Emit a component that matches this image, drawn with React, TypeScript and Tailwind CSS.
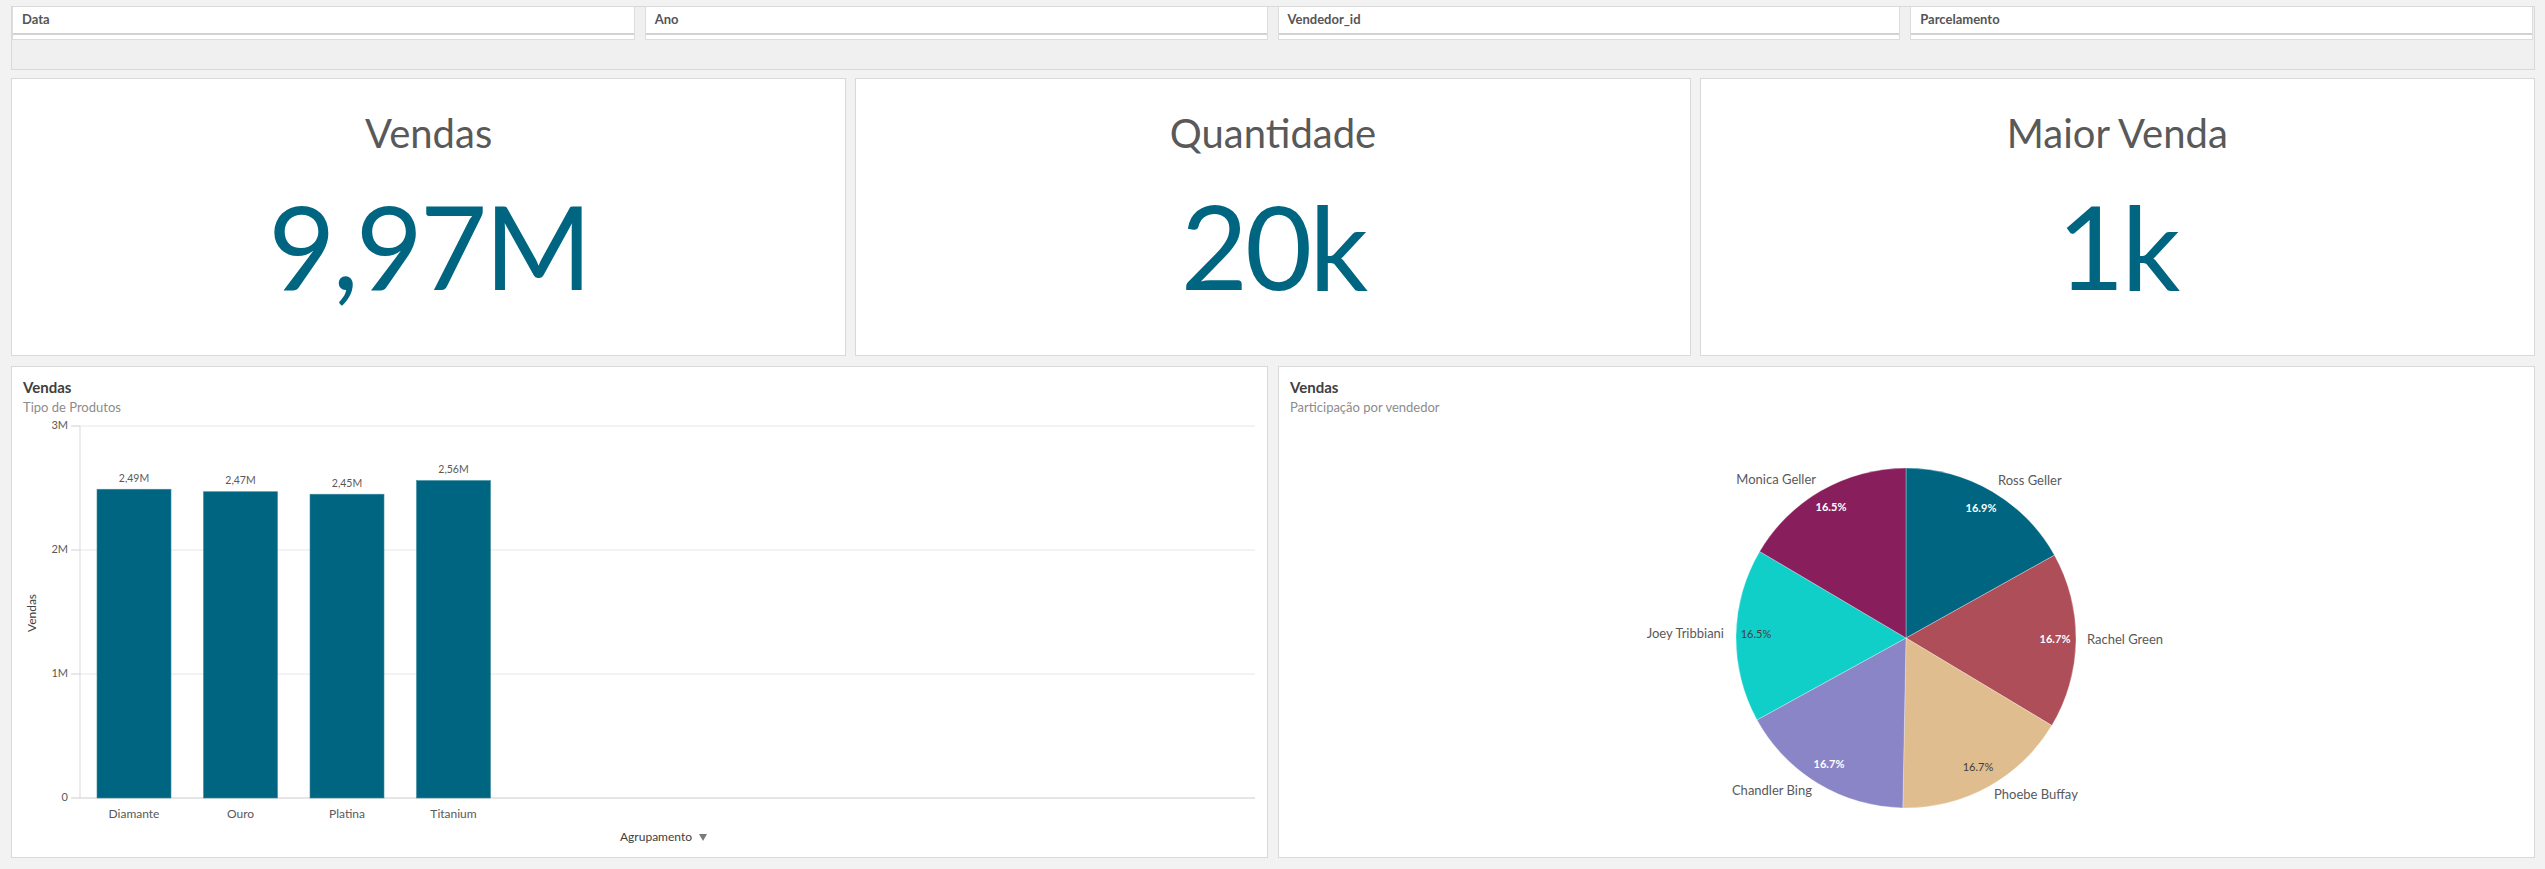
import React from "react";

const filters = ["Data", "Ano", "Vendedor_id", "Parcelamento"];

const kpis = [
  { title: "Vendas", value: "9,97M" },
  { title: "Quantidade", value: "20k" },
  { title: "Maior Venda", value: "1k" },
];

const bars = [
  { label: "Diamante", value: 2.49, text: "2,49M" },
  { label: "Ouro", value: 2.47, text: "2,47M" },
  { label: "Platina", value: 2.45, text: "2,45M" },
  { label: "Titanium", value: 2.56, text: "2,56M" },
];

// angles go clockwise from 12 o'clock
const slices = [
  { name: "Ross Geller", pct: 16.9, color: "#006580", dark: false, lx: 719, ly: 64, anchor: "start", px: 702, py: 91 },
  { name: "Rachel Green", pct: 16.7, color: "#ad4e59", dark: false, lx: 808, ly: 223, anchor: "start", px: 776, py: 222 },
  { name: "Phoebe Buffay", pct: 16.7, color: "#e0bd8e", dark: true, lx: 715, ly: 378, anchor: "start", px: 699, py: 350 },
  { name: "Chandler Bing", pct: 16.7, color: "#8a85c6", dark: false, lx: 533, ly: 374, anchor: "end", px: 550, py: 347 },
  { name: "Joey Tribbiani", pct: 16.5, color: "#10cfc9", dark: true, lx: 445, ly: 217, anchor: "end", px: 477, py: 217 },
  { name: "Monica Geller", pct: 16.5, color: "#881f5c", dark: false, lx: 537, ly: 63, anchor: "end", px: 552, py: 90 },
];

function FilterBox({ label }: { label: string }) {
  return (
    <div className="bg-white border-x border-[#dcdcdc]">
      <div className="h-[28px] flex items-center px-[9px] border-b-2 border-[#d2d2d2] text-[13px] font-bold text-[#555]">
        {label}
      </div>
      <div className="h-[5px] border-b border-[#dcdcdc]"></div>
    </div>
  );
}

function KpiCard({ title, value }: { title: string; value: string }) {
  return (
    <div className="bg-white border border-[#d9d9d9] flex flex-col items-center pt-[34px]">
      <div className="text-[40px] leading-[40px] text-[#595959]">{title}</div>
      <div className="mt-[35px] text-[116px] leading-[116px] tracking-[-3px] text-[#006580]">{value}</div>
    </div>
  );
}

function CardTitle({ title, subtitle }: { title: string; subtitle: string }) {
  return (
    <div className="px-[11px] pt-[11px]">
      <div className="text-[15px] leading-[18px] font-bold text-[#404040]">{title}</div>
      <div className="mt-[3px] text-[13px] leading-[16px] text-[#8c8c8c]">{subtitle}</div>
    </div>
  );
}

function BarChart() {
  const y0 = 380;
  const unit = 124;
  return (
    <svg width={1255} height={436} className="mt-[3px] block">
      {[3, 2, 1].map((t) => (
        <g key={t}>
          <line x1={68} x2={1243} y1={y0 - t * unit} y2={y0 - t * unit} stroke="#e6e6e6" />
          <line x1={59} x2={68} y1={y0 - t * unit} y2={y0 - t * unit} stroke="#d0d0d0" />
          <text x={56} y={y0 - t * unit} textAnchor="end" dominantBaseline="middle" fontSize={11} fill="#595959">
            {t}M
          </text>
        </g>
      ))}
      <line x1={68} x2={68} y1={y0 - 3 * unit} y2={y0} stroke="#d9d9d9" />
      <line x1={59} x2={1243} y1={y0} y2={y0} stroke="#cccccc" />
      <text x={56} y={y0} textAnchor="end" dominantBaseline="middle" fontSize={11} fill="#595959">
        0
      </text>
      <text
        x={21}
        y={195}
        textAnchor="middle"
        dominantBaseline="middle"
        fontSize={12}
        fill="#404040"
        transform="rotate(-90 21 195)"
      >
        Vendas
      </text>
      {bars.map((b, i) => {
        const x = 85 + i * 106.5;
        const h = b.value * unit;
        return (
          <g key={b.label}>
            <rect x={x} y={y0 - h} width={74} height={h} fill="#006580" stroke="#3c8aa0" strokeWidth={0.6} />
            <text x={x + 37} y={y0 - h - 10} textAnchor="middle" dominantBaseline="middle" fontSize={10.5} fill="#595959">
              {b.text}
            </text>
            <text x={x + 37} y={397} textAnchor="middle" dominantBaseline="middle" fontSize={12} fill="#595959">
              {b.label}
            </text>
          </g>
        );
      })}
      <text x={608} y={420} dominantBaseline="middle" fontSize={12} fill="#404040">
        Agrupamento
      </text>
      <path d="M687 416 L695 416 L691 423 Z" fill="#7a7a7a" />
    </svg>
  );
}

function PieChart() {
  const cx = 627;
  const cy = 220;
  const r = 170;
  let acc = 0;
  const pt = (a: number) => {
    const rad = (a * Math.PI) / 180;
    return [cx + r * Math.sin(rad), cy - r * Math.cos(rad)];
  };
  return (
    <svg width={1255} height={436} className="mt-[3px] block">
      {slices.map((s) => {
        const a0 = (acc / 100) * 360;
        acc += s.pct;
        const a1 = (acc / 100) * 360;
        const [x0, y0] = pt(a0);
        const [x1, y1] = pt(a1);
        return (
          <path
            key={s.name}
            d={`M${cx} ${cy} L${x0} ${y0} A${r} ${r} 0 0 1 ${x1} ${y1} Z`}
            fill={s.color}
            stroke="#ffffff"
            strokeOpacity={0.5}
            strokeWidth={0.6}
          />
        );
      })}
      {slices.map((s) => (
        <g key={s.name + "-l"}>
          <text x={s.lx} y={s.ly} textAnchor={s.anchor as "start" | "end"} dominantBaseline="middle" fontSize={13} fill="#595959">
            {s.name}
          </text>
          <text
            x={s.px}
            y={s.py}
            textAnchor="middle"
            dominantBaseline="middle"
            fontSize={11}
            fontWeight={s.dark ? 400 : 700}
            fill={s.dark ? "#404040" : "#ffffff"}
          >
            {s.pct.toFixed(1)}%
          </text>
        </g>
      ))}
    </svg>
  );
}

export default function App() {
  return (
    <div className="w-[2545px] h-[869px] bg-[#f2f2f2] pl-[11px] pr-[10px] pt-[6px] font-[Lato,sans-serif] overflow-hidden">
      <div className="h-[64px] border border-[#d9d9d9] bg-[#f0f0f0] pr-[1px]">
        <div className="grid grid-cols-4 gap-[10px]">
          {filters.map((f) => (
            <FilterBox key={f} label={f} />
          ))}
        </div>
      </div>
      <div className="mt-[8px] h-[278px] grid grid-cols-3 gap-[9px]">
        {kpis.map((k) => (
          <KpiCard key={k.title} title={k.title} value={k.value} />
        ))}
      </div>
      <div className="mt-[10px] h-[492px] grid grid-cols-2 gap-[10px]">
        <div className="bg-white border border-[#d9d9d9] overflow-hidden">
          <CardTitle title="Vendas" subtitle="Tipo de Produtos" />
          <BarChart />
        </div>
        <div className="bg-white border border-[#d9d9d9] overflow-hidden">
          <CardTitle title="Vendas" subtitle="Participação por vendedor" />
          <PieChart />
        </div>
      </div>
    </div>
  );
}
